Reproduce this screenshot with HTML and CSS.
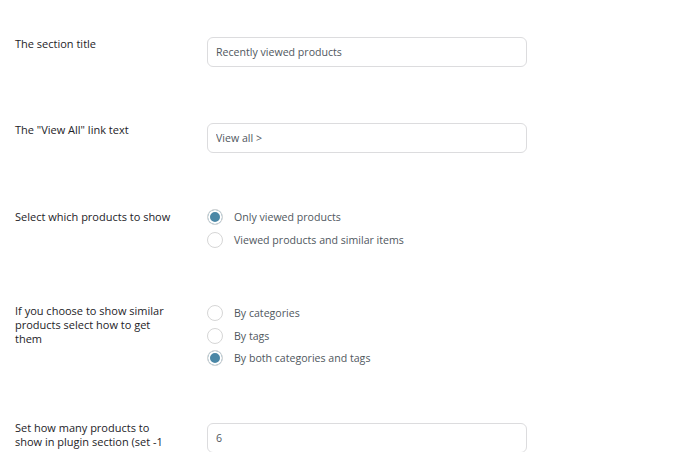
FILE: index.html
```html
<!DOCTYPE html>
<html>
<head>
<meta charset="utf-8">
<link rel="stylesheet" href="styles.css">
</head>
<body>
<div class="form">
  <div class="row">
    <div class="label">The section title</div>
    <div class="field"><input class="text" type="text" value="Recently viewed products"></div>
  </div>
  <div class="row">
    <div class="label">The "View All" link text</div>
    <div class="field"><input class="text" type="text" value="View all &gt;"></div>
  </div>
  <div class="row row-shift">
    <div class="label">Select which products to show</div>
    <div class="field">
      <div class="radios">
        <label class="opt"><input type="radio" name="a" checked><span>Only viewed products</span></label>
        <label class="opt"><input type="radio" name="a"><span>Viewed products and similar items</span></label>
      </div>
    </div>
  </div>
  <div class="row">
    <div class="label">If you choose to show similar products select how to get them</div>
    <div class="field">
      <div class="radios radios-low">
        <label class="opt"><input type="radio" name="b"><span>By categories</span></label>
        <label class="opt"><input type="radio" name="b"><span>By tags</span></label>
        <label class="opt"><input type="radio" name="b" checked><span>By both categories and tags</span></label>
      </div>
    </div>
  </div>
  <div class="row">
    <div class="label label-up">Set how many products to show in plugin section (set -1</div>
    <div class="field"><input class="text" type="text" value="6"></div>
  </div>
</div>
</body>
</html>
```

FILE: styles.css
```css
html, body {
  margin: 0;
  padding: 0;
  background: #ffffff;
  overflow: hidden;
}
body {
  font-family: "Open Sans", "Noto Sans", sans-serif;
  font-size: 11px;
  line-height: 14px;
  color: #1d2327;
}
.form {
  display: flex;
  flex-direction: column;
  gap: 56px;
  padding: 37px 0 0 15px;
}
.row {
  display: grid;
  grid-template-columns: 192px 320px;
  align-items: start;
}
.row-shift {
  margin-top: 1px;
}
.label {
  width: 160px;
  color: #1d2327;
}
.label-up {
  margin-top: -2px;
}
.text {
  box-sizing: border-box;
  width: 320px;
  height: 30px;
  margin: 0;
  padding: 0 8px;
  border: 1px solid #dcdcde;
  border-radius: 6px;
  font-family: "Open Sans", "Noto Sans", sans-serif;
  font-size: 10.6px;
  color: #50575e;
  background: #fff;
  outline: none;
}
.radios {
  display: flex;
  flex-direction: column;
  margin: -4px 0 -3px;
}
.radios-low {
  margin-top: -2px;
}
.opt {
  display: flex;
  align-items: center;
  gap: 11px;
  height: 22.5px;
  font-size: 10.6px;
  color: #50575e;
}
.opt input {
  appearance: none;
  -webkit-appearance: none;
  box-sizing: border-box;
  width: 16px;
  height: 16px;
  margin: 0;
  border: 1px solid #d6d6d6;
  border-radius: 50%;
  background: #fff;
  flex: none;
}
.opt input:checked {
  background: #4a87a6;
  box-shadow: inset 0 0 0 2px #fff;
}
```
